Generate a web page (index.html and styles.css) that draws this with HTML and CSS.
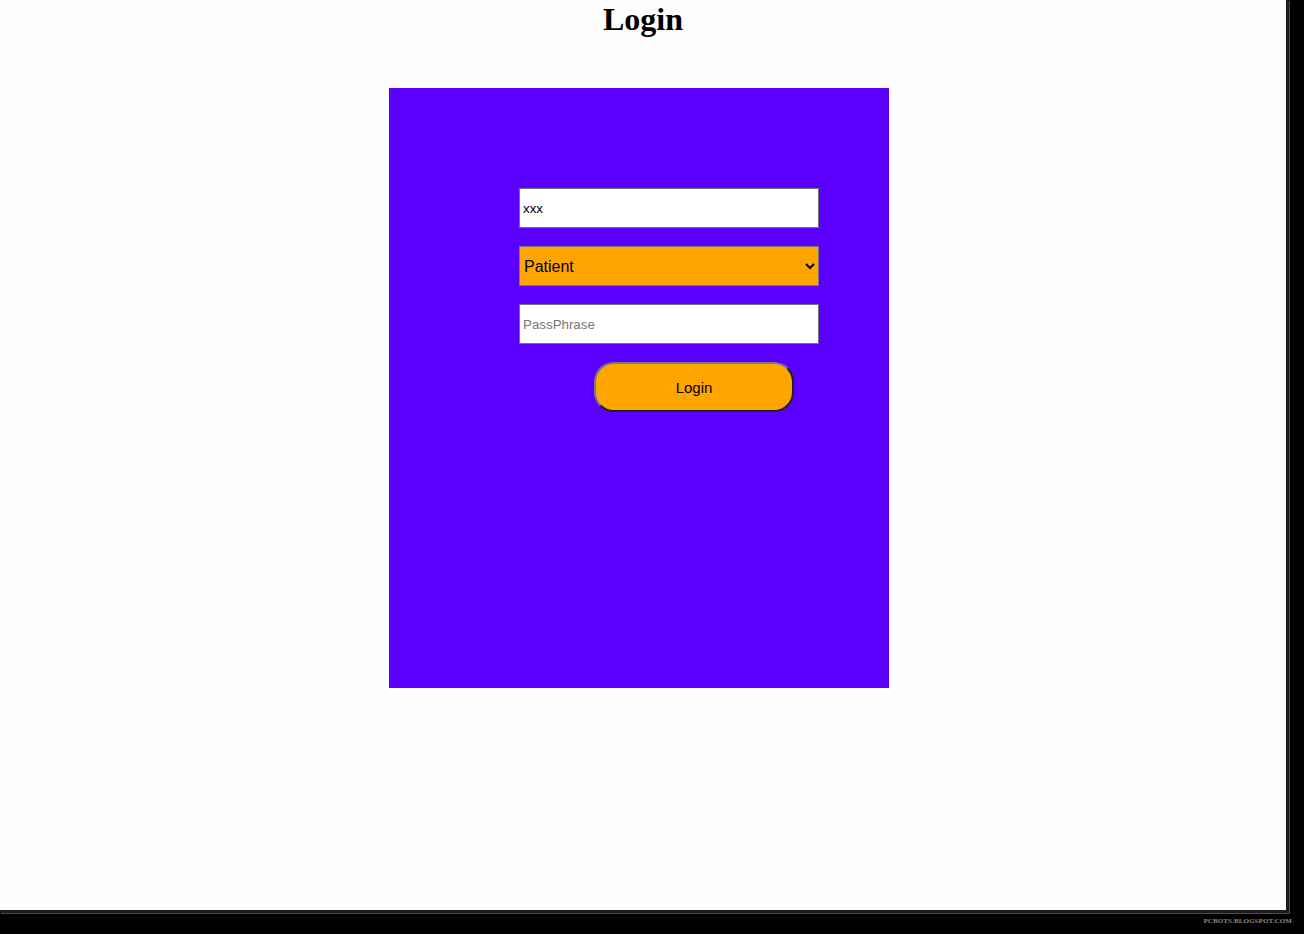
FILE: index.html
```html
<!DOCTYPE html>
<html>
<head>
<meta charset="utf-8">
<title>Login</title>
<link rel="stylesheet" href="styles.css">
</head>
<body>
<div class="screen">
  <h1 class="title">Login</h1>
  <div class="panel">
    <form class="form">
      <input class="field" type="text" value="xxx">
      <select class="field select">
        <option>Patient</option>
        <option>Doctor</option>
      </select>
      <input class="field" type="password" placeholder="PassPhrase">
      <button class="btn" type="button">Login</button>
    </form>
  </div>
</div>
<div class="credit">PCBOTS.BLOGSPOT.COM</div>
</body>
</html>
```

FILE: styles.css
```css
html, body {
  margin: 0;
  padding: 0;
  background: #000;
}
body {
  width: 1304px;
  height: 934px;
  overflow: hidden;
}
.screen {
  width: 1286px;
  height: 910px;
  background: #fefefe;
  border-right: 3px solid #1b1b21;
  border-bottom: 3px solid #1b1b21;
  box-shadow: 1px 1px 0 #4a4a4e;
  box-sizing: content-box;
  overflow: hidden;
}
.title {
  margin: 0;
  text-align: center;
  font-family: "Liberation Serif", serif;
  font-size: 32px;
  font-weight: bold;
  line-height: 39px;
  color: #000;
}
.panel {
  margin: 49px 0 0 389px;
  width: 500px;
  height: 600px;
  background: #5b00ff;
  box-sizing: border-box;
  padding: 100px 0 0 130px;
}
.form {
  display: flex;
  flex-direction: column;
  align-items: flex-start;
  gap: 18px;
}
.field {
  width: 300px;
  height: 40px;
  box-sizing: border-box;
  margin: 0;
  border: 1px solid #767676;
  background: #fff;
  font-family: "Liberation Sans", Arial, sans-serif;
  font-size: 13.33px;
  padding: 1px 2px 1px 3px;
  color: #000;
}
.field::placeholder {
  color: #777;
}
.select {
  background: #ffa500;
  font-size: 16px;
  padding: 0;
  border-radius: 0;
}
.btn {
  margin-left: 75px;
  width: 200px;
  height: 50px;
  box-sizing: border-box;
  background: #ffa500;
  border: 2px solid;
  border-color: #7a7a7a #222 #222 #7a7a7a;
  border-radius: 20px;
  font-family: "Liberation Sans", Arial, sans-serif;
  font-size: 15px;
  color: #000;
  padding: 0;
}
.credit {
  text-align: right;
  padding: 4px 12px 0 0;
  font-family: "Liberation Serif", serif;
  font-size: 7px;
  font-weight: bold;
  letter-spacing: 0.1px;
  color: #8a8a8a;
}
```
